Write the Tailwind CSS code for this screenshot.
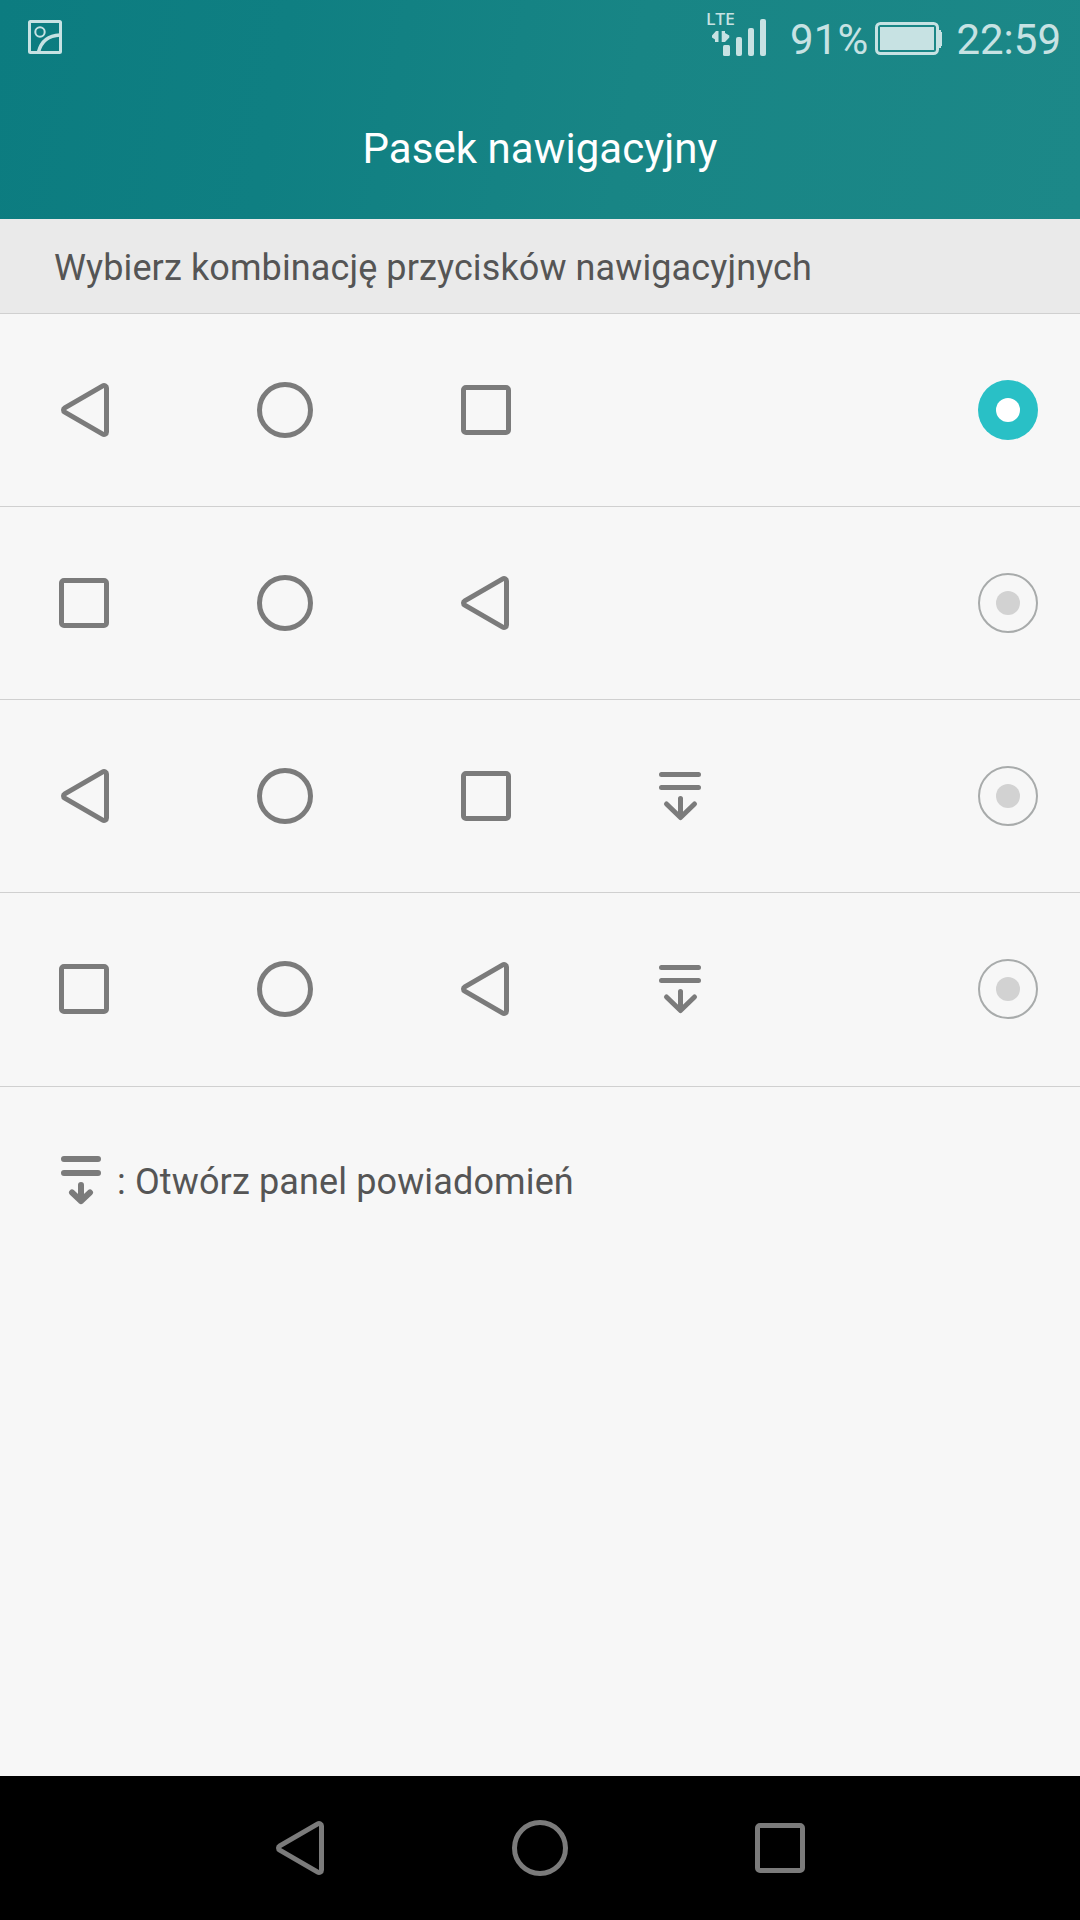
<!DOCTYPE html>
<html lang="pl">
<head>
  <meta charset="UTF-8">
  <meta name="viewport" content="width=device-width, initial-scale=1.0">
  <script src="https://cdn.jsdelivr.net/npm/@tailwindcss/browser@4"></script>
  <title>Pasek nawigacyjny</title>
</head>
<body class="flex flex-col w-[1080px] h-[1920px] overflow-hidden bg-[#f7f7f7] font-['Roboto',sans-serif] text-[#555]">
  <svg class="hidden">
    <symbol id="back" viewBox="0 0 60 60">
      <path d="M10.75 27.835 48.75 5.835A2.5 2.5 0 0 1 52.5 8V52A2.5 2.5 0 0 1 48.75 54.165L10.75 32.165A2.5 2.5 0 0 1 10.75 27.835Z" fill="none" stroke="#7b7b7b" stroke-width="5"/>
    </symbol>
    <symbol id="home" viewBox="0 0 60 60">
      <circle cx="31" cy="30" r="25.5" fill="none" stroke="#7b7b7b" stroke-width="5"/>
    </symbol>
    <symbol id="recent" viewBox="0 0 60 60">
      <rect x="7.5" y="7.5" width="45" height="45" rx="2.5" fill="none" stroke="#7b7b7b" stroke-width="5"/>
    </symbol>
    <symbol id="panel" viewBox="0 0 60 60">
      <path d="M11.5 8.5H48.5M11.5 21.5H48.5M30.5 32.5V51M16.5 38 30.5 51.500 44.5 38" fill="none" stroke="#7b7b7b" stroke-width="5" stroke-linecap="round" stroke-linejoin="round"/>
    </symbol>
    <symbol id="radio-on" viewBox="0 0 60 60">
      <circle cx="30" cy="30" r="30" fill="#29c0c6"/>
      <circle cx="30" cy="30" r="12" fill="#fff"/>
    </symbol>
    <symbol id="radio-off" viewBox="0 0 60 60">
      <circle cx="30" cy="30" r="29" fill="none" stroke="#a8abab" stroke-width="2"/>
      <circle cx="30" cy="30" r="12" fill="#d2d2d2"/>
    </symbol>
  </svg>

  <header class="flex flex-col h-[219px] shrink-0 bg-linear-[100deg,#0c7c80_0%,#0f7f82_26%,#188585_58%,#1c8888_100%]">
    <div class="flex h-[76px] items-center pl-7 pr-[19px] text-[#c7e2e3]">
      <svg class="size-[34px] mt-[-2px]" viewBox="0 0 34 34" fill="none" stroke="currentColor">
        <rect x="1.5" y="1.5" width="31" height="31" rx="1" stroke-width="3"/>
        <circle cx="12" cy="12" r="4.7" stroke-width="2"/>
        <path d="M10.5 32C13 22 20 15.500 32 15" stroke-width="3.500"/>
      </svg>
      <svg class="ml-[645px] w-[62px] h-[50px] mt-[-10px]" viewBox="0 0 62 50" fill="currentColor">
        <text class="font-['Noto_Sans',sans-serif]" x="-1" y="17" font-size="16.5" font-weight="500" textLength="29" lengthAdjust="spacingAndGlyphs">LTE</text>
        <path d="M11.500 23V34H8V31.500L5 29.500V27.500L9 23ZM14.700 23H18V25L22.300 27.500V29.500L18 34H14.700Z"/>
        <rect x="16" y="37" width="7" height="11" rx="1.500"/>
        <rect x="29" y="29" width="6" height="19" rx="2"/>
        <rect x="41" y="20" width="6" height="28" rx="2"/>
        <rect x="53" y="11" width="6" height="37" rx="2"/>
      </svg>
      <span class="ml-[21px] w-[85px] pt-[3px] text-[42px] leading-none tracking-[0.2px] whitespace-nowrap">91%</span>
      <svg class="w-[68px] h-[34px] mt-px" viewBox="0 0 68 34" fill="none">
        <rect x="1.500" y="1.500" width="61" height="30" rx="4" stroke="currentColor" stroke-width="3"/>
        <path d="M5 5H59V28H5ZM64 8H66V10H67V24H66V26H64Z" fill="currentColor"/>
      </svg>
      <span class="ml-auto pt-[3px] text-[42px] leading-none">22:59</span>
    </div>
    <h1 class="pt-[45px] text-center text-[42px] leading-[56px] tracking-[0.06px] text-white">Pasek nawigacyjny</h1>
  </header>

  <h2 class="flex h-[95px] shrink-0 items-center border-b border-[#d0d0d0] bg-[#eaeaea] pl-[54px] pt-1 text-[36px] tracking-[0.11px]">Wybierz kombinację przycisków nawigacyjnych</h2>

  <ul>
    <li class="flex h-[193px] items-center border-b border-[#d0d0d0] pl-[54px] pr-[42px]">
      <svg class="size-[60px]"><use href="#back"/></svg>
      <svg class="size-[60px] ml-[140px]"><use href="#home"/></svg>
      <svg class="size-[60px] ml-[142px]"><use href="#recent"/></svg>
      <svg class="size-[60px] ml-auto"><use href="#radio-on"/></svg>
    </li>
    <li class="flex h-[193px] items-center border-b border-[#d0d0d0] pl-[54px] pr-[42px]">
      <svg class="size-[60px]"><use href="#recent"/></svg>
      <svg class="size-[60px] ml-[140px]"><use href="#home"/></svg>
      <svg class="size-[60px] ml-[140px]"><use href="#back"/></svg>
      <svg class="size-[60px] ml-auto"><use href="#radio-off"/></svg>
    </li>
    <li class="flex h-[193px] items-center border-b border-[#d0d0d0] pl-[54px] pr-[42px]">
      <svg class="size-[60px]"><use href="#back"/></svg>
      <svg class="size-[60px] ml-[140px]"><use href="#home"/></svg>
      <svg class="size-[60px] ml-[142px]"><use href="#recent"/></svg>
      <svg class="size-[60px] ml-[134px]"><use href="#panel"/></svg>
      <svg class="size-[60px] ml-auto"><use href="#radio-off"/></svg>
    </li>
    <li class="flex h-[194px] items-center border-b border-[#d0d0d0] pl-[54px] pr-[42px] pb-px">
      <svg class="size-[60px]"><use href="#recent"/></svg>
      <svg class="size-[60px] ml-[140px]"><use href="#home"/></svg>
      <svg class="size-[60px] ml-[140px]"><use href="#back"/></svg>
      <svg class="size-[60px] ml-[136px]"><use href="#panel"/></svg>
      <svg class="size-[60px] ml-auto"><use href="#radio-off"/></svg>
    </li>
  </ul>

  <p class="flex items-center pt-[65px] pl-[60px] text-[36px] leading-[60px] tracking-[0.13px]">
    <svg class="w-[42px] h-[50px] mr-[15px] mt-[-5px]" viewBox="0 0 42 50" fill="none" stroke="#7b7b7b" stroke-width="6" stroke-linecap="round" stroke-linejoin="round">
      <path d="M4 4H38M4 18H38M21 30V46M12 37.500 21 46 30 37.500"/>
    </svg>
    : Otwórz panel powiadomień
  </p>

  <nav class="flex h-[144px] mt-auto shrink-0 items-center bg-black pl-[269px]">
    <svg class="size-[60px]"><use href="#back"/></svg>
    <svg class="size-[60px] ml-[180px]"><use href="#home"/></svg>
    <svg class="size-[60px] ml-[181px]"><use href="#recent"/></svg>
  </nav>
</body>
</html>
